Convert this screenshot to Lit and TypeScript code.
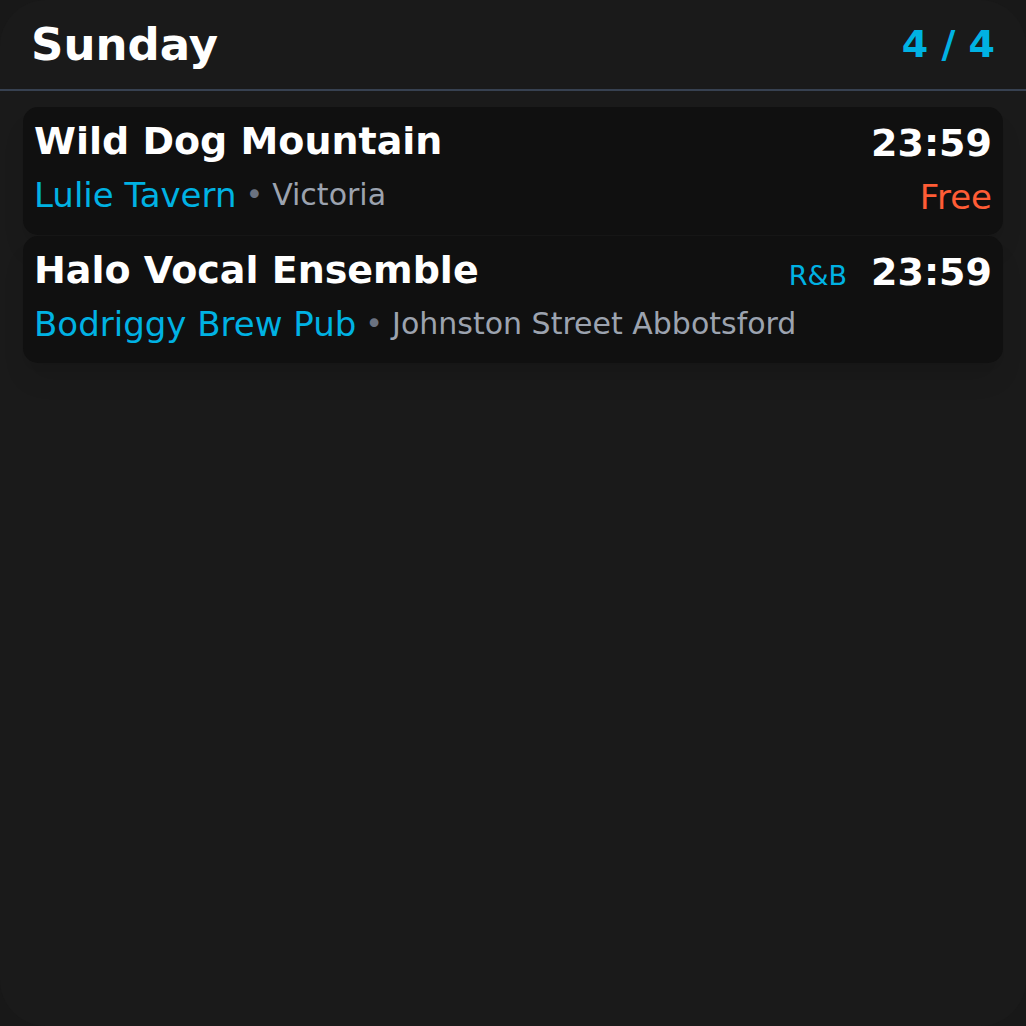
import { LitElement, html, css, nothing } from "lit";
import { customElement, property } from "lit/decorators.js";

interface Gig {
  title: string;
  venue: string;
  area: string;
  time: string;
  genre?: string;
  price?: string;
}

const GIGS: Gig[] = [
  { title: "Wild Dog Mountain", venue: "Lulie Tavern", area: "Victoria", time: "23:59", price: "Free" },
  {
    title: "Halo Vocal Ensemble",
    venue: "Bodriggy Brew Pub",
    area: "Johnston Street Abbotsford",
    time: "23:59",
    genre: "R&B",
  },
];

@customElement("gig-card")
export class GigCard extends LitElement {
  @property({ attribute: false }) gig!: Gig;

  static styles = css`
    :host {
      display: block;
    }
    .card {
      padding: 8px 11px 12px;
      border-radius: 15px;
      background: #101010;
      box-shadow:
        0 19px 28px -6px rgba(0, 0, 0, 0.1),
        0 8px 11px -8px rgba(0, 0, 0, 0.1);
    }
    .row {
      display: flex;
      align-items: flex-start;
      justify-content: space-between;
      gap: 24px;
    }
    .details {
      min-height: 51px;
    }
    .title {
      margin: 0;
      color: #fff;
      font-size: 38px;
      font-weight: 700;
      line-height: 52px;
    }
    .place {
      display: flex;
      flex-wrap: wrap;
      align-items: center;
      margin: 0;
      line-height: 48px;
    }
    .venue {
      color: #00b2e3;
      font-size: 34px;
    }
    .dot {
      margin: 0 9px;
      color: #6b7280;
      font-size: 30px;
    }
    .area {
      color: #9ca3af;
      font-size: 30px;
    }
    .when {
      display: flex;
      align-items: baseline;
      gap: 24px;
      line-height: 56px;
    }
    .genre {
      color: #00b2e3;
      font-size: 27px;
      line-height: 40px;
    }
    .time {
      color: #fff;
      font-size: 38px;
      font-weight: 700;
    }
    .price {
      color: #ff5c35;
      font-size: 34px;
      line-height: 52px;
    }
  `;

  render() {
    const g = this.gig;
    return html`
      <article class="card">
        <div class="row">
          <h2 class="title">${g.title}</h2>
          <div class="when">
            ${g.genre ? html`<span class="genre">${g.genre}</span>` : nothing}
            <time class="time">${g.time}</time>
          </div>
        </div>
        <div class="row details">
          <p class="place">
            <span class="venue">${g.venue}</span>
            <span class="dot">•</span>
            <span class="area">${g.area}</span>
          </p>
          ${g.price ? html`<span class="price">${g.price}</span>` : nothing}
        </div>
      </article>
    `;
  }
}

@customElement("app-root")
export class AppRoot extends LitElement {
  static styles = css`
    :host {
      display: block;
      min-height: 100vh;
      background: #181818;
      font-family: "DejaVu Sans", sans-serif;
    }
    .panel {
      box-sizing: border-box;
      min-height: 100vh;
      border-radius: 46px;
      background: #1a1a1a;
    }
    .header {
      display: flex;
      align-items: center;
      justify-content: space-between;
      padding: 16px 31px;
      border-bottom: 2px solid #374151;
    }
    .day {
      margin: 0;
      color: #fff;
      font-size: 45px;
      font-weight: 700;
      line-height: 57px;
    }
    .count {
      color: #00b2e3;
      font-size: 38px;
      font-weight: 700;
      line-height: 57px;
    }
    .list {
      display: grid;
      gap: 1px;
      margin: 0;
      padding: 16px 23px;
      list-style: none;
    }
  `;

  render() {
    return html`
      <main class="panel">
        <header class="header">
          <h1 class="day">Sunday</h1>
          <span class="count">4 / 4</span>
        </header>
        <ul class="list">
          ${GIGS.map((gig) => html`<li><gig-card .gig=${gig}></gig-card></li>`)}
        </ul>
      </main>
    `;
  }
}
